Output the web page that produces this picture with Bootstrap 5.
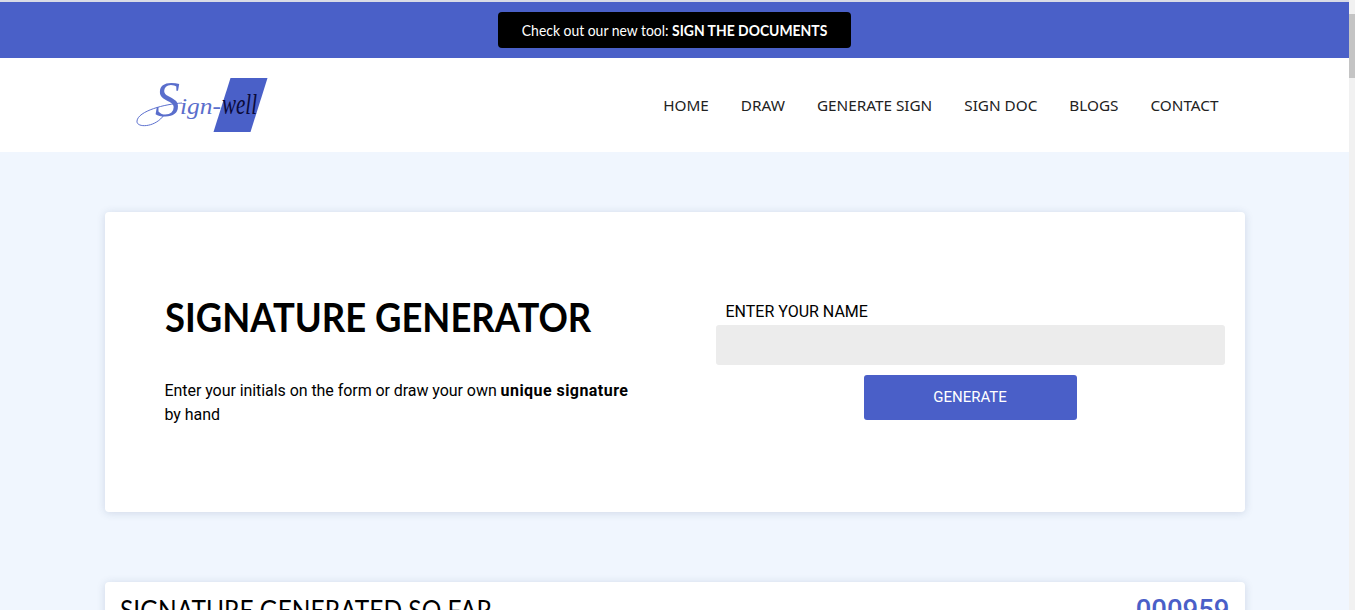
<!DOCTYPE html>
<html lang="en">
<head>
<meta charset="utf-8">
<title>Signature Generator</title>
<link href="https://cdn.jsdelivr.net/npm/bootstrap@5.3.0/dist/css/bootstrap.min.css" rel="stylesheet">
<style>
html,body{height:100%;overflow:hidden}
body{font-family:Roboto,sans-serif;background:#fff;color:#000}
.shell{height:610px;overflow:hidden}
.pagecol{min-width:0;height:610px;overflow:hidden;background:#f0f6fe;border-top:2px solid #d9dbe6}
.promo{background:#4a60c8;height:56px}
.promo-btn{background:#000;color:#fff;width:353px;height:36px;border-radius:4px;font-family:Lato,sans-serif;font-size:16px}
.promo-txt{display:block;white-space:nowrap;transform:scaleX(.87)}
.promo-btn b{font-weight:700}
.topnav{background:#fff;height:94px;padding:0}
.topnav .container{padding:0 26px 0 30px}
.logo-svg{display:block;width:134px;height:56px}
.menu-a{color:#222;font-family:"Noto Sans",sans-serif;font-size:15.3px;text-decoration:none;padding:0 16px}
.menu-a:last-child{padding-right:0}
.sheet{background:#fff;border-radius:4px;box-shadow:0 1px 8px rgba(40,60,110,.16)}
.gen-sheet{height:300px;margin-top:60px;padding:0 20px 0 60px}
.gen-title{font-family:Lato,sans-serif;font-weight:700;font-size:40px;line-height:48px;color:#000;margin:0 0 38px;transform:scaleX(.91);transform-origin:left center;white-space:nowrap}
.gen-text{font-size:16px;line-height:24px;margin:0;width:480px;letter-spacing:-.06px}
.gen-text b{letter-spacing:.45px}
.gen-left{width:551px;padding-top:81px}
.gen-right{width:509px;padding-top:90px}
.name-label{font-size:16px;line-height:20px;margin:0 0 3px 10px;display:block}
.name-input{background:#ececec;border:0;height:40px;border-radius:3px}
.gen-btn{background:#4a5fc8;color:#fff;width:213px;height:45px;font-size:15px;border:0;border-radius:3px;margin-top:10px}
.gen-btn:hover{background:#4a5fc8;color:#fff}
.count-sheet{height:120px;margin-top:70px;padding:10px 15px}
.count-title{font-family:Lato,sans-serif;font-size:27px;line-height:36px;font-weight:400;margin:0;color:#000;transform:scaleX(.907);transform-origin:left center;white-space:nowrap}
.count-num{font-size:27.5px;line-height:36px;font-weight:500;color:#4a5fc8}
.fakebar{width:6px;height:610px;background:#f1f1f1}
.fakebar-thumb{height:64px;margin-top:14px;background:#c4c4c4}
</style>
</head>
<body>
<div class="shell d-flex">
  <div class="pagecol flex-grow-1">
    <div class="promo d-flex justify-content-center align-items-center">
      <a class="promo-btn d-flex justify-content-center align-items-center text-decoration-none" href="#"><span class="promo-txt">Check out our new tool: <b>SIGN THE DOCUMENTS</b></span></a>
    </div>
    <nav class="navbar topnav">
      <div class="container d-flex justify-content-between align-items-center flex-nowrap">
        <a href="#" aria-label="Sign-well">
          <svg class="logo-svg" viewBox="0 0 134 56">
            <polygon points="95.5,1 132.5,1 115.5,55 78.5,55" fill="#4a60c8"/>
            <path d="M47 26C30 27 3 34 2 44C1 51 20 51 29 38" fill="none" stroke="#4a60c8" stroke-width=".9"/>
            <text x="20" y="39" font-family="Liberation Serif,serif" font-style="italic" font-size="50" fill="#5a6ecc">S</text>
            <text x="45" y="37" font-family="Liberation Serif,serif" font-style="italic" font-size="24" fill="#5a6ecc" textLength="41" lengthAdjust="spacingAndGlyphs">ign-</text>
            <text x="87" y="37" font-family="Liberation Serif,serif" font-style="italic" font-size="29" fill="#0a0a3a" textLength="35" lengthAdjust="spacingAndGlyphs">well</text>
          </svg>
        </a>
        <div class="d-flex align-items-center">
          <a class="menu-a" href="#">HOME</a>
          <a class="menu-a" href="#">DRAW</a>
          <a class="menu-a" href="#">GENERATE SIGN</a>
          <a class="menu-a" href="#">SIGN DOC</a>
          <a class="menu-a" href="#">BLOGS</a>
          <a class="menu-a" href="#">CONTACT</a>
        </div>
      </div>
    </nav>
    <main class="container px-0">
      <section class="sheet gen-sheet d-flex">
        <div class="gen-left">
          <h1 class="gen-title">SIGNATURE GENERATOR</h1>
          <p class="gen-text">Enter your initials on the form or draw your own <b>unique signature</b> by hand</p>
        </div>
        <form class="gen-right d-flex flex-column">
          <label class="name-label" for="nm">ENTER YOUR NAME</label>
          <input id="nm" class="form-control name-input" type="text">
          <button type="button" class="btn gen-btn align-self-center">GENERATE</button>
        </form>
      </section>
      <section class="sheet count-sheet d-flex justify-content-between">
        <h2 class="count-title">SIGNATURE GENERATED SO FAR</h2>
        <span class="count-num">000959</span>
      </section>
    </main>
  </div>
  <div class="fakebar flex-shrink-0"><div class="fakebar-thumb"></div></div>
</div>
<script src="https://cdn.jsdelivr.net/npm/bootstrap@5.3.0/dist/js/bootstrap.bundle.min.js"></script>
</body>
</html>
